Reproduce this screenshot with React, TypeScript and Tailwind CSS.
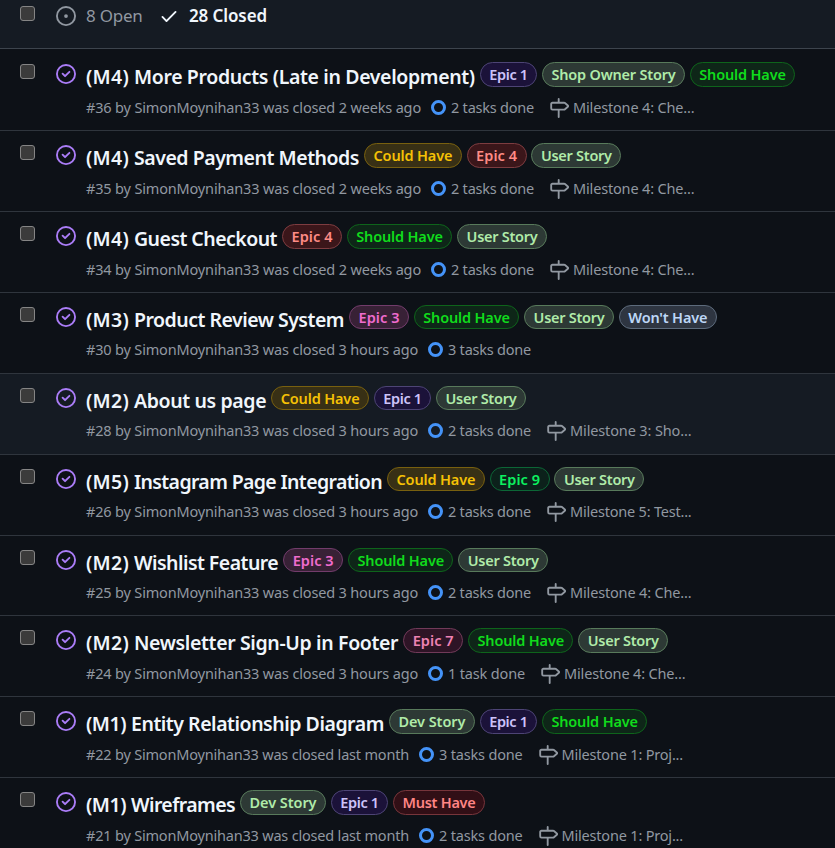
import { useLayoutEffect, useRef, useState } from "react";

const LABELS = {
  "Epic 1": { w: 57.4, c: "text-[#cdc3f9] bg-[#1b1239] border-[#4d4475]" },
  "Epic 3": { w: 60, c: "text-[#f06cce] bg-[#382136] border-[#723c6b]" },
  "Epic 4": { w: 60, c: "text-[#ff8b85] bg-[#3b161a] border-[#7d3c40]" },
  "Epic 7": { w: 60, c: "text-[#ee82b4] bg-[#2e1426] border-[#713a59]" },
  "Epic 9": { w: 60, c: "text-[#0cf060] bg-[#0c211b] border-[#0c6636]" },
  "Shop Owner Story": { w: 143, c: "text-[#b0eba9] bg-[#2d3935] border-[#587a5b]" },
  "User Story": { w: 89.9, c: "text-[#b0eba9] bg-[#2d3935] border-[#587a5b]" },
  "Dev Story": { w: 86, c: "text-[#b0eba9] bg-[#2d3935] border-[#587a5b]" },
  "Should Have": { w: 105.5, c: "text-[#10dc1c] bg-[#0e2618] border-[#0e641b]" },
  "Could Have": { w: 97.8, c: "text-[#f5c105] bg-[#383015] border-[#78600f]" },
  "Must Have": { w: 92, c: "text-[#ff8585] bg-[#310f16] border-[#77353b]" },
  "Won't Have": { w: 98, c: "text-[#bdd7f7] bg-[#2e3541] border-[#5d6b7c]" },
};
type LabelName = keyof typeof LABELS;

type Issue = {
  id: number;
  tag: string;
  title: string;
  w: number;
  labels: LabelName[];
  when: string;
  whenW: number;
  tasks: string;
  tasksW: number;
  milestone?: string;
  box: string;
  hover?: boolean;
  tight?: boolean;
};

const ISSUES: Issue[] = [
  { id: 36, tag: "(M4)", title: "More Products (Late in Development)", w: 388.8, labels: ["Epic 1", "Shop Owner Story", "Should Have"], when: "2 weeks ago", whenW: 335, tasks: "2 tasks done", tasksW: 83, milestone: "Milestone 4: Che...", box: "h-[82px] pt-px" },
  { id: 35, tag: "(M4)", title: "Saved Payment Methods", w: 273, labels: ["Could Have", "Epic 4", "User Story"], when: "2 weeks ago", whenW: 335, tasks: "2 tasks done", tasksW: 83, milestone: "Milestone 4: Che...", box: "h-[81px]" },
  { id: 34, tag: "(M4)", title: "Guest Checkout", w: 191, labels: ["Epic 4", "Should Have", "User Story"], when: "2 weeks ago", whenW: 335, tasks: "2 tasks done", tasksW: 83, milestone: "Milestone 4: Che...", box: "h-[81px]" },
  { id: 30, tag: "(M3)", title: "Product Review System", w: 258, labels: ["Epic 3", "Should Have", "User Story", "Won't Have"], when: "3 hours ago", whenW: 332, tasks: "3 tasks done", tasksW: 83, box: "h-[81px]", tight: true },
  { id: 28, tag: "(M2)", title: "About us page", w: 180.2, labels: ["Could Have", "Epic 1", "User Story"], when: "3 hours ago", whenW: 332, tasks: "2 tasks done", tasksW: 83, milestone: "Milestone 3: Sho...", box: "h-[81px]", hover: true, tight: true },
  { id: 26, tag: "(M5)", title: "Instagram Page Integration", w: 296, labels: ["Could Have", "Epic 9", "User Story"], when: "3 hours ago", whenW: 332, tasks: "2 tasks done", tasksW: 83, milestone: "Milestone 5: Test...", box: "h-[81px]", tight: true },
  { id: 25, tag: "(M2)", title: "Wishlist Feature", w: 192.2, labels: ["Epic 3", "Should Have", "User Story"], when: "3 hours ago", whenW: 332, tasks: "2 tasks done", tasksW: 83, milestone: "Milestone 4: Che...", box: "h-[80px]", tight: true },
  { id: 24, tag: "(M2)", title: "Newsletter Sign-Up in Footer", w: 312.2, labels: ["Epic 7", "Should Have", "User Story"], when: "3 hours ago", whenW: 332, tasks: "1 task done", tasksW: 77, milestone: "Milestone 4: Che...", box: "h-[81px]" },
  { id: 22, tag: "(M1)", title: "Entity Relationship Diagram", w: 297.9, labels: ["Dev Story", "Epic 1", "Should Have"], when: "last month", whenW: 323, tasks: "3 tasks done", tasksW: 83.5, milestone: "Milestone 1: Proj...", box: "h-[81px]" },
  { id: 21, tag: "(M1)", title: "Wireframes", w: 149, labels: ["Dev Story", "Epic 1", "Must Have"], when: "last month", whenW: 323, tasks: "2 tasks done", tasksW: 83.5, milestone: "Milestone 1: Proj...", box: "h-[81px]" },
];

const ICONS = {
  closed: "M11.28 6.78a.75.75 0 0 0-1.06-1.06L7.25 8.69 5.78 7.22a.75.75 0 0 0-1.06 1.06l2 2a.75.75 0 0 0 1.06 0l3.5-3.5ZM16 8A8 8 0 1 1 0 8a8 8 0 0 1 16 0Zm-1.5 0a6.5 6.5 0 1 0-13 0 6.5 6.5 0 0 0 13 0Z",
  opened: "M8 9.5a1.5 1.5 0 1 0 0-3 1.5 1.5 0 0 0 0 3ZM8 0a8 8 0 1 1 0 16A8 8 0 0 1 8 0ZM1.5 8a6.5 6.5 0 1 0 13 0 6.5 6.5 0 0 0-13 0Z",
  check: "M13.78 4.22a.75.75 0 0 1 0 1.06l-7.25 7.25a.75.75 0 0 1-1.06 0L2.22 9.28a.751.751 0 0 1 .018-1.042.751.751 0 0 1 1.042-.018L6 10.94l6.72-6.72a.75.75 0 0 1 1.06 0Z",
  milestone: "M7.75 0a.75.75 0 0 1 .75.75V3h3.634c.414 0 .814.147 1.13.414l2.07 1.75a1.75 1.75 0 0 1 0 2.672l-2.07 1.75a1.75 1.75 0 0 1-1.13.414H8.5v5.25a.75.75 0 0 1-1.5 0V10H2.75A1.75 1.75 0 0 1 1 8.25v-3.5C1 3.784 1.784 3 2.75 3H7V.75A.75.75 0 0 1 7.75 0Zm4.384 8.5a.25.25 0 0 0 .161-.06l2.07-1.75a.248.248 0 0 0 0-.38l-2.07-1.75a.25.25 0 0 0-.161-.06H2.75a.25.25 0 0 0-.25.25v3.5c0 .138.112.25.25.25h9.384Z",
};

function Icon({ name, className }: { name: keyof typeof ICONS; className: string }) {
  return (
    <svg viewBox="0 0 16 16" fill="currentColor" className={`size-5 shrink-0 ${className}`}>
      <path d={ICONS[name]} />
    </svg>
  );
}

/** Single line of text tracked so that it fills exactly `w` pixels. */
function Fit({ text, w }: { text: string; w: number }) {
  const ref = useRef<HTMLSpanElement>(null);
  const [spacing, setSpacing] = useState(0);
  useLayoutEffect(() => {
    if (ref.current) setSpacing((w - ref.current.getBoundingClientRect().width) / text.length);
  }, [text, w]);
  return (
    <span className="block shrink-0 whitespace-nowrap" style={{ width: w }}>
      <span ref={ref} style={{ letterSpacing: spacing }}>{text}</span>
    </span>
  );
}

function Checkbox() {
  return <span className="block size-[15px] shrink-0 rounded-[3px] border border-[#858585] bg-[#3b3b3b]" />;
}

function Label({ name, tight }: { name: LabelName; tight?: boolean }) {
  const { w, c } = LABELS[name];
  return (
    <span className={`flex shrink-0 items-center justify-center rounded-full border text-[14.5px] font-semibold ${tight ? "h-6 pt-px" : "h-[25px]"} ${c}`} style={{ width: w }}>
      <Fit text={name} w={w - 19} />
    </span>
  );
}

function Row({ issue }: { issue: Issue }) {
  const tagW = issue.tag === "(M1)" ? 40 : 43;
  return (
    <li className={`border-b border-[#2f353d] ${issue.box} ${issue.hover ? "bg-[#151b23]" : ""}`}>
      <div className="flex pl-5">
        <div className="pt-[14px]"><Checkbox /></div>
        <Icon name="closed" className="mt-[14px] ml-[21px] text-[#ab7df8]" />
        <div className="ml-[10px] pt-[12px]">
          <div className="flex h-[25px] gap-[5px]">
            <h3 className="flex gap-[5px] pt-[2px] text-[19.5px] leading-[26px] font-semibold text-[#f0f6fc]">
              <Fit text={issue.tag} w={tagW} />
              <Fit text={issue.title} w={issue.w - tagW - 5} />
            </h3>
            <div className="flex gap-[4.8px]">
              {issue.labels.map((l) => <Label key={l} name={l} tight={issue.tight} />)}
            </div>
          </div>
          <div className={`flex h-5 items-center text-[14.5px] leading-5 text-[#9198a1] ${issue.tight ? "mt-[9px]" : "mt-[10px]"}`}>
            <Fit text={`#${issue.id} by SimonMoynihan33 was closed ${issue.when}`} w={issue.whenW} />
            <span className="mr-[5px] ml-[10px] size-[15px] shrink-0 rounded-full border-[3px] border-[#4493f8]" />
            <Fit text={issue.tasks} w={issue.tasksW} />
            {issue.milestone && (
              <>
                <Icon name="milestone" className="mt-px mr-1 ml-[15px]" />
                <Fit text={issue.milestone} w={121.5} />
              </>
            )}
          </div>
        </div>
      </div>
    </li>
  );
}

export default function App() {
  return (
    <main className="h-[848px] w-full overflow-hidden bg-[#0d1117] font-['Noto_Sans','Open_Sans',sans-serif]">
      <header className="flex h-[49px] border-b border-[#3d444d] bg-[#151b23] pl-5 text-[17px] leading-[22px]">
        <div className="pt-[6px]"><Checkbox /></div>
        <Icon name="opened" className="mt-[6px] ml-[21px] text-[#9198a1]" />
        <div className="mt-[5px] ml-[10px] text-[#9198a1]"><Fit text="8 Open" w={56.5} /></div>
        <Icon name="check" className="mt-[6px] ml-4 text-[#f0f6fc]" />
        <div className="mt-[5px] ml-[10.5px] font-semibold text-[#f0f6fc]"><Fit text="28 Closed" w={78} /></div>
      </header>
      <ul>
        {ISSUES.map((issue) => <Row key={issue.id} issue={issue} />)}
      </ul>
    </main>
  );
}
